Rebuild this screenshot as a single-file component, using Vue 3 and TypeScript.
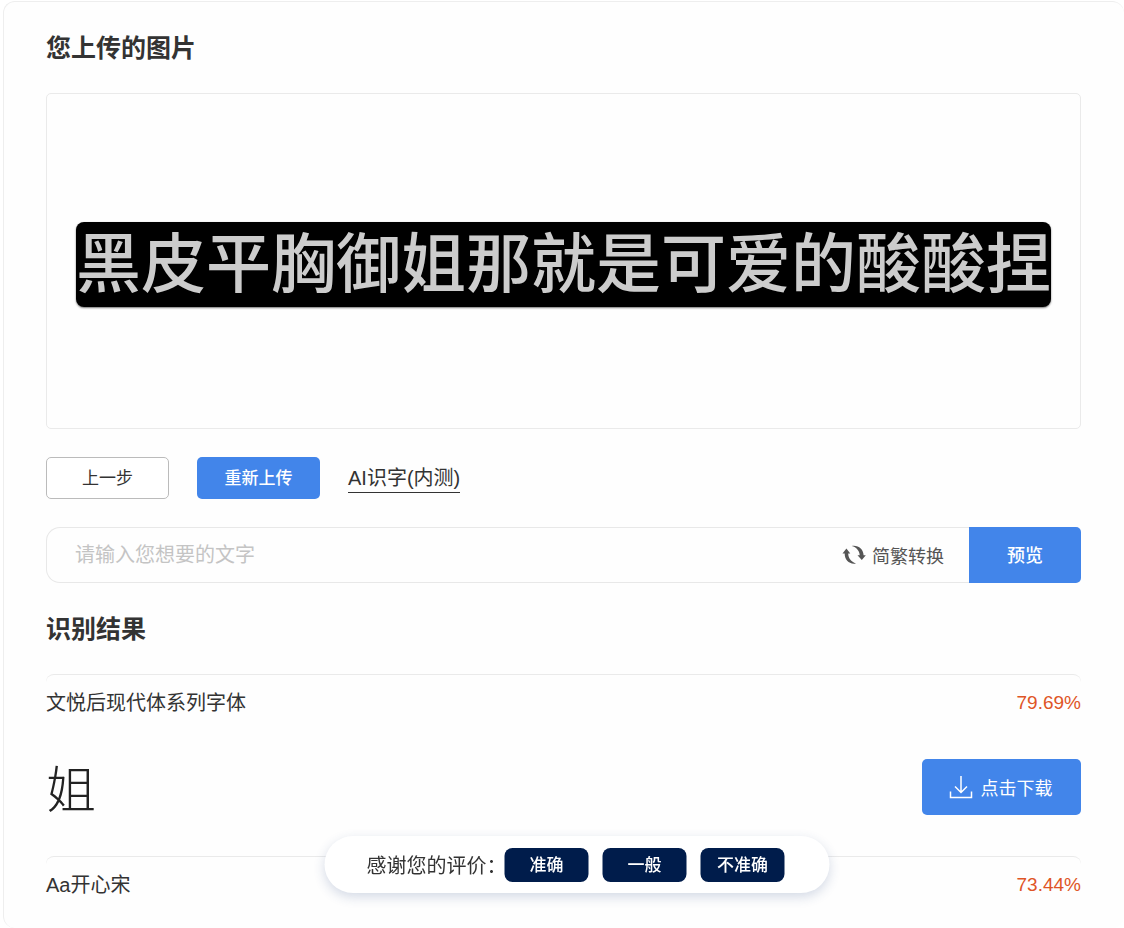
<script setup lang="ts">
import { ref } from 'vue'

interface FontMatch {
  name: string
  score: string
  sample?: string
}

const keyword = ref('')
const uploadedText = '黑皮平胸御姐那就是可爱的酸酸捏'
const results: FontMatch[] = [
  { name: '文悦后现代体系列字体', score: '79.69%', sample: '姐' },
  { name: 'Aa开心宋', score: '73.44%' },
]
const ratings: string[] = ['准确', '一般', '不准确']
</script>

<template>
  <main class="card">
    <h2 class="title">您上传的图片</h2>
    <div class="preview">
      <div class="strip">{{ uploadedText }}</div>
    </div>

    <div class="actions">
      <button type="button" class="btn outline">上一步</button>
      <button type="button" class="btn primary">重新上传</button>
      <a href="#" class="ai-link">AI识字(内测)</a>
    </div>

    <form class="search" @submit.prevent>
      <input v-model="keyword" type="text" aria-label="请输入您想要的文字" placeholder="请输入您想要的文字" />
      <button type="button" class="convert">
        <svg width="24" height="20" viewBox="0 0 24 20" aria-hidden="true">
          <path d="M4.400 3.500 8.300 8.600H6.200C6.300 13 9 17 14 18.500 7.500 19.700 2.500 15 2.700 8.600H.5Z" fill="#555" />
          <path d="M19.800 15 15.500 10.200h2.200C17.500 5.800 14.500 2.300 9.800 1 16.500 0 21.400 4.300 21.600 10.200h2.200Z" fill="#555" />
        </svg>
        <span>简繁转换</span>
      </button>
      <button type="submit" class="submit">预览</button>
    </form>

    <h2 class="title results-title">识别结果</h2>
    <section v-for="item in results" :key="item.name" class="result">
      <div class="result-head">
        <span>{{ item.name }}</span>
        <span class="score">{{ item.score }}</span>
      </div>
      <div v-if="item.sample" class="result-body">
        <span class="sample">{{ item.sample }}</span>
        <button type="button" class="download">
          <svg width="24" height="24" viewBox="0 0 24 24" fill="none" stroke="#fff" stroke-width="1.500" aria-hidden="true">
            <path d="M12 1v16M6 11.500l6 6 6-6M1.500 16.500v6h21v-6" />
          </svg>
          <span>点击下载</span>
        </button>
      </div>
    </section>

    <div class="rating">
      <span class="rating-label">感谢您的评价：</span>
      <button v-for="label in ratings" :key="label" type="button">{{ label }}</button>
    </div>
  </main>
</template>

<style>
body {
  background: #fff;
}
</style>

<style scoped>
.card,
.card button,
.card input {
  font-family: "Liberation Sans", "Noto Sans CJK SC", sans-serif;
}
.card {
  display: flow-root;
  box-sizing: border-box;
  min-height: calc(100vh - 1px);
  margin: 1px 0 0 3px;
  padding: 24px 43px 0 42px;
  border: 1px solid #eee;
  border-width: 1px 0 0 1px;
  border-radius: 12px;
  background: #fefefe;
  color: #333;
  font-size: 20px;
}
button {
  box-sizing: border-box;
  margin: 0;
  padding: 0;
  border: 0;
  cursor: pointer;
}
.title {
  margin: 0;
  font-size: 25px;
  line-height: 44px;
  font-weight: 700;
}
.preview {
  box-sizing: border-box;
  display: flex;
  align-items: center;
  justify-content: center;
  height: 336px;
  margin-top: 23px;
  padding-top: 6px;
  border: 1px solid #eaeaea;
  border-radius: 5px;
}
.strip {
  height: 85px;
  border-radius: 8px;
  background: #000;
  box-shadow: 0 1px 2px #777;
  color: #ccc;
  font-size: 65px;
  line-height: 85px;
  font-weight: 500;
  white-space: nowrap;
}
.actions {
  display: flex;
  gap: 28px;
  margin-top: 28px;
}
.btn {
  width: 123px;
  height: 42px;
  padding-bottom: 3px;
  border-radius: 5px;
  font-size: 17px;
}
.outline {
  border: 1px solid #bbb;
  background: #fff;
  color: #333;
}
.primary {
  background: #4285ea;
  color: #fff;
  font-weight: 500;
}
.ai-link {
  align-self: center;
  border-bottom: 1px solid #333;
  color: #333;
  font-size: 20px;
  line-height: 28px;
  text-decoration: none;
}
.search {
  display: flex;
  height: 56px;
  margin-top: 28px;
}
.search input {
  box-sizing: border-box;
  flex: 1;
  min-width: 0;
  padding: 0 0 0 28px;
  border: 1px solid #e8e8e8;
  border-right: 0;
  border-radius: 14px 0 0 14px;
  outline: 0;
  background: transparent;
  font-size: 20px;
}
.search input::placeholder {
  color: #c4c4c4;
}
.convert {
  display: flex;
  align-items: center;
  gap: 6px;
  padding-right: 25px;
  border: 1px solid #e8e8e8;
  border-width: 1px 0;
  background: transparent;
  color: #555;
  font-size: 18px;
}
.submit {
  width: 112px;
  padding-bottom: 2px;
  border-radius: 0 5px 5px 0;
  background: #4285ea;
  color: #fff;
  font-size: 18px;
  font-weight: 500;
}
.results-title {
  margin: 24px 0 23px;
}
.result {
  padding: 14px 0 28px;
  border-top: 1px solid #eaeaea;
  border-radius: 8px;
}
.result:last-of-type {
  padding-bottom: 0;
}
.result-head {
  display: flex;
  justify-content: space-between;
  line-height: 28px;
}
.score {
  color: #df5526;
  font-size: 19px;
}
.result-body {
  display: flex;
  align-items: center;
  justify-content: space-between;
  height: 56px;
  margin-top: 42px;
  margin-bottom: 13px;
}
.sample {
  padding-top: 8px;
  color: #222;
  font-size: 50px;
  line-height: 56px;
  font-weight: 300;
}
.download {
  display: flex;
  align-items: center;
  justify-content: center;
  gap: 8px;
  width: 159px;
  height: 56px;
  padding-right: 2px;
  border-radius: 5px;
  background: #4285ea;
  color: #fff;
  font-size: 18px;
}
.rating {
  position: fixed;
  bottom: 35px;
  left: 50%;
  display: flex;
  align-items: center;
  box-sizing: border-box;
  height: 57px;
  margin-left: 15px;
  padding: 0 45px 0 42px;
  gap: 14px;
  border-radius: 29px;
  background: #fff;
  box-shadow: 0 4px 12px rgba(40, 70, 130, 0.2);
  transform: translateX(-50%);
  white-space: nowrap;
}
.rating-label {
  margin-right: -16px;
}
.rating button {
  width: 84px;
  height: 34px;
  padding-bottom: 2px;
  border-radius: 8px;
  background: #001c4b;
  color: #fff;
  font-size: 17px;
  font-weight: 500;
}
</style>
